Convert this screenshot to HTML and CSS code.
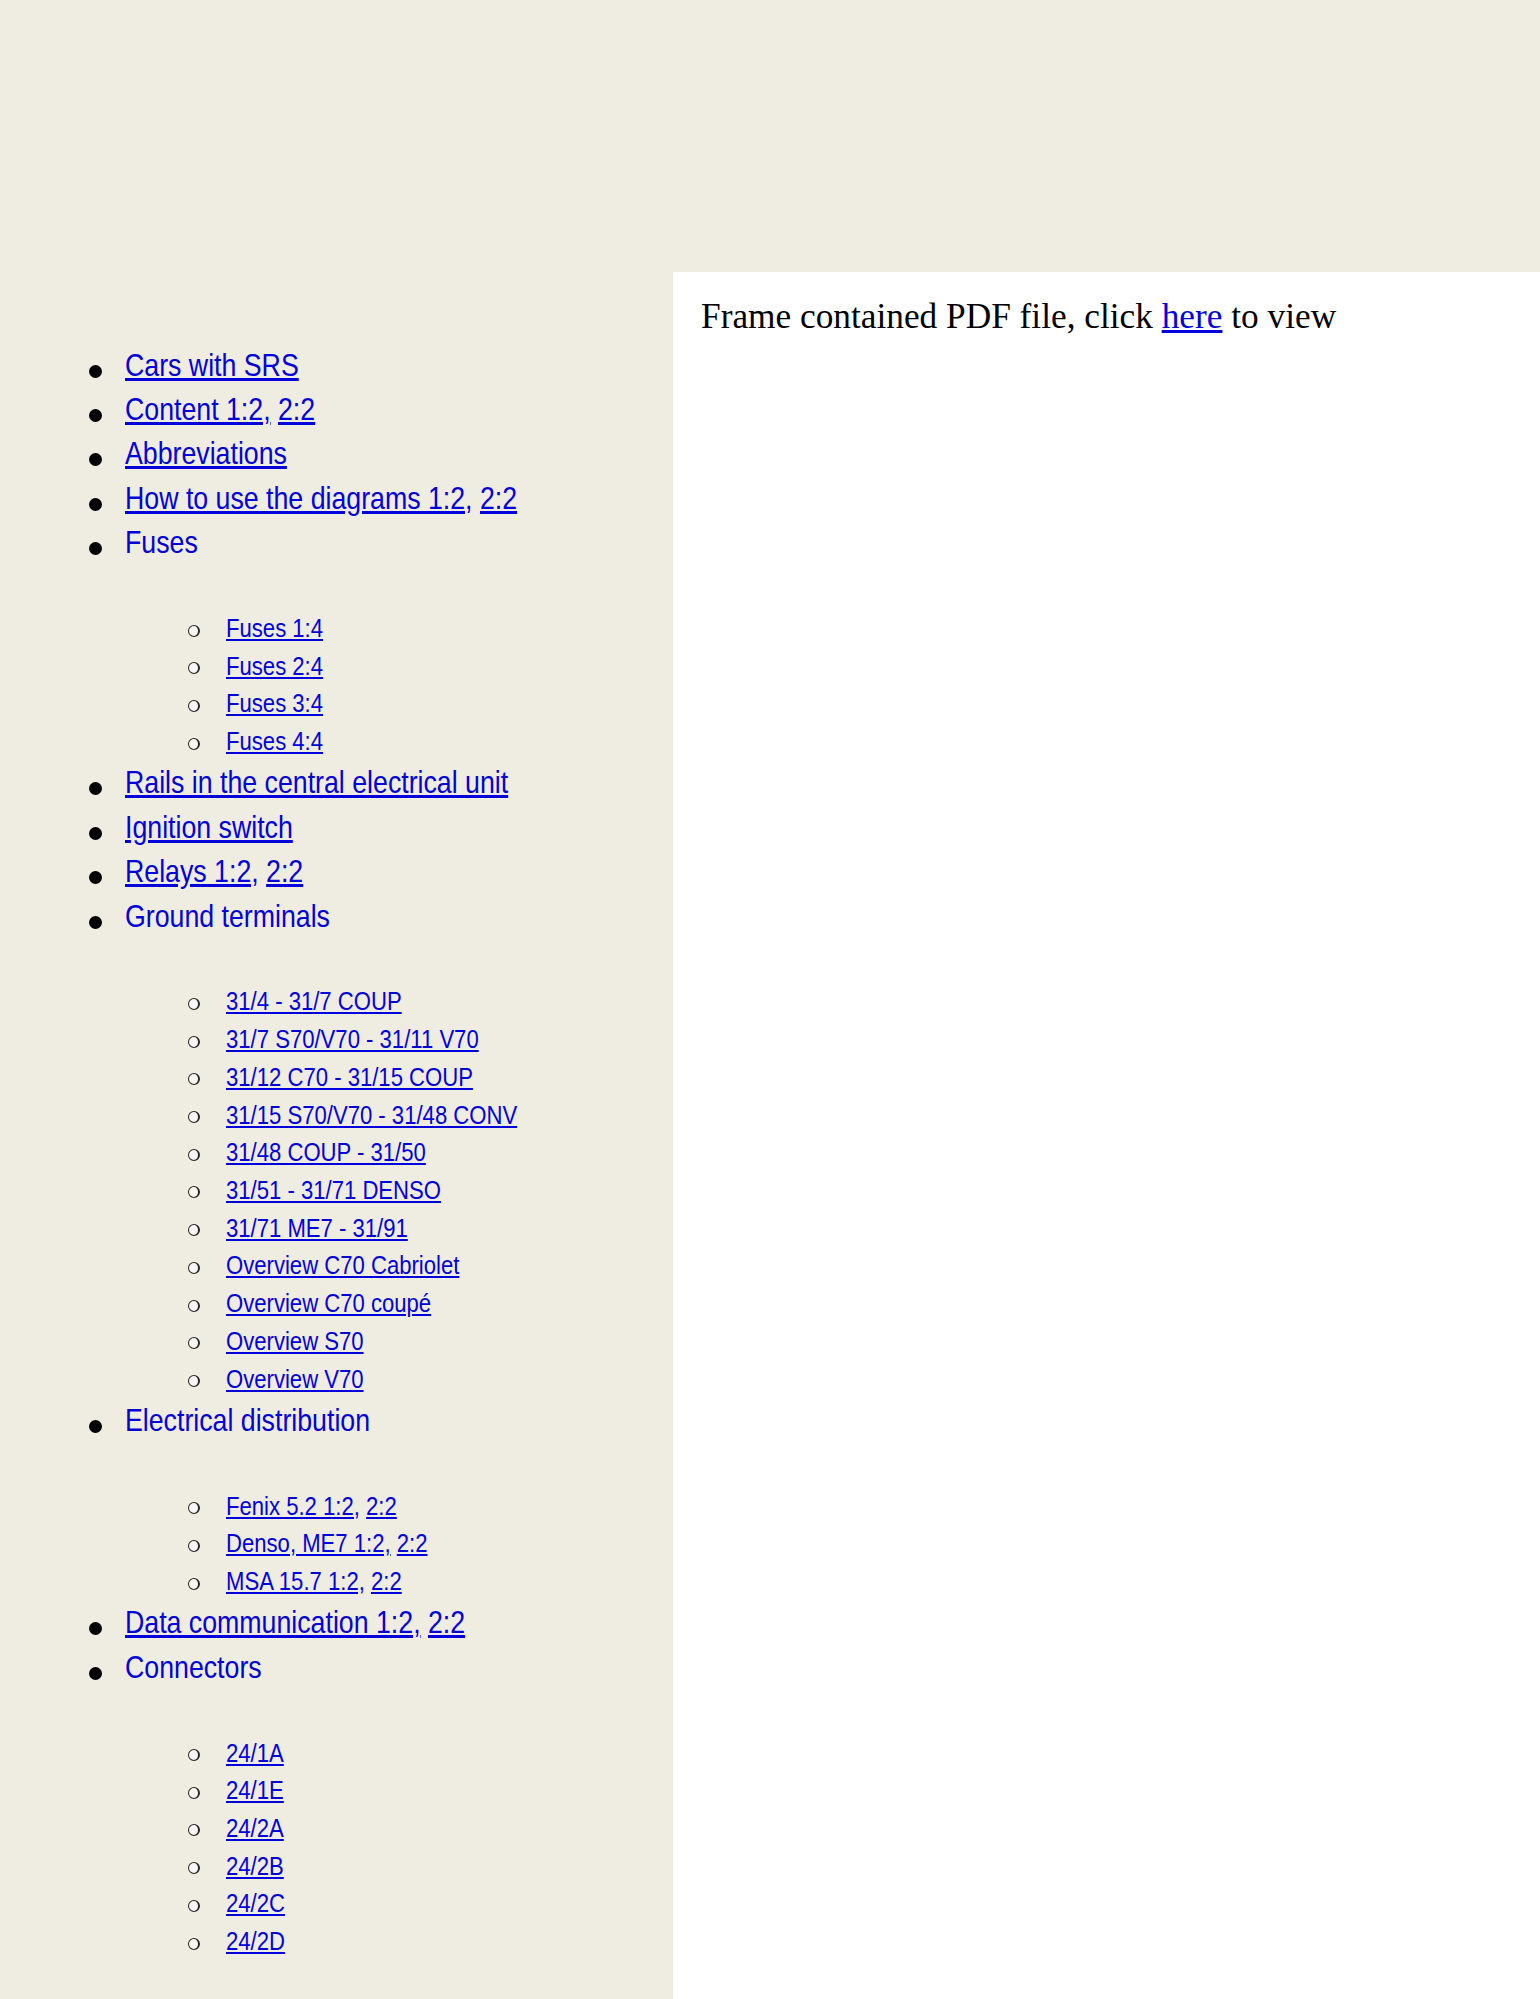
FILE: index.html
```html
<!DOCTYPE html>
<html>
<head>
<meta charset="utf-8">
<title>Wiring diagrams</title>
<link rel="stylesheet" href="styles.css">
</head>
<body>
<div class="topframe"></div>
<div class="frames">
  <div class="leftframe">
    <ul class="menu">
      <li><span class="t"><a href="#">Cars with SRS</a></span></li>
      <li><span class="t"><a href="#">Content 1:2,</a> <a href="#">2:2</a></span></li>
      <li><span class="t"><a href="#">Abbreviations</a></span></li>
      <li><span class="t"><a href="#">How to use the diagrams 1:2,</a> <a href="#">2:2</a></span></li>
      <li><span class="t label">Fuses</span>
        <ul class="sub">
          <li><span class="t"><a href="#">Fuses 1:4</a></span></li>
          <li><span class="t"><a href="#">Fuses 2:4</a></span></li>
          <li><span class="t"><a href="#">Fuses 3:4</a></span></li>
          <li><span class="t"><a href="#">Fuses 4:4</a></span></li>
        </ul>
      </li>
      <li><span class="t"><a href="#">Rails in the central electrical unit</a></span></li>
      <li><span class="t"><a href="#">Ignition switch</a></span></li>
      <li><span class="t"><a href="#">Relays 1:2,</a> <a href="#">2:2</a></span></li>
      <li><span class="t label">Ground terminals</span>
        <ul class="sub">
          <li><span class="t"><a href="#">31/4 - 31/7 COUP</a></span></li>
          <li><span class="t"><a href="#">31/7 S70/V70 - 31/11 V70</a></span></li>
          <li><span class="t"><a href="#">31/12 C70 - 31/15 COUP</a></span></li>
          <li><span class="t"><a href="#">31/15 S70/V70 - 31/48 CONV</a></span></li>
          <li><span class="t"><a href="#">31/48 COUP - 31/50</a></span></li>
          <li><span class="t"><a href="#">31/51 - 31/71 DENSO</a></span></li>
          <li><span class="t"><a href="#">31/71 ME7 - 31/91</a></span></li>
          <li><span class="t"><a href="#">Overview C70 Cabriolet</a></span></li>
          <li><span class="t"><a href="#">Overview C70 coupé</a></span></li>
          <li><span class="t"><a href="#">Overview S70</a></span></li>
          <li><span class="t"><a href="#">Overview V70</a></span></li>
        </ul>
      </li>
      <li><span class="t label">Electrical distribution</span>
        <ul class="sub">
          <li><span class="t"><a href="#">Fenix 5.2 1:2,</a> <a href="#">2:2</a></span></li>
          <li><span class="t"><a href="#">Denso, ME7 1:2,</a> <a href="#">2:2</a></span></li>
          <li><span class="t"><a href="#">MSA 15.7 1:2,</a> <a href="#">2:2</a></span></li>
        </ul>
      </li>
      <li><span class="t"><a href="#">Data communication 1:2,</a> <a href="#">2:2</a></span></li>
      <li><span class="t label">Connectors</span>
        <ul class="sub">
          <li><span class="t"><a href="#">24/1A</a></span></li>
          <li><span class="t"><a href="#">24/1E</a></span></li>
          <li><span class="t"><a href="#">24/2A</a></span></li>
          <li><span class="t"><a href="#">24/2B</a></span></li>
          <li><span class="t"><a href="#">24/2C</a></span></li>
          <li><span class="t"><a href="#">24/2D</a></span></li>
        </ul>
      </li>
    </ul>
  </div>
  <div class="mainframe">
    <p class="pdfnote">Frame contained PDF file, click <a href="#">here</a> to view</p>
  </div>
</div>
</body>
</html>
```

FILE: styles.css
```css
html, body {
  margin: 0;
  padding: 0;
}

body {
  background: #efece2;
  width: 1540px;
  min-height: 1999px;
}

.topframe {
  height: 272px;
  background: #efece2;
}

.frames {
  display: grid;
  grid-template-columns: 673px 1fr;
  min-height: 1727px;
}

.leftframe {
  background: #efece2;
  padding-top: 70.5px;
}

.mainframe {
  background: #ffffff;
  padding: 25px 0 0 28px;
}

.pdfnote {
  margin: 0;
  font-family: "Liberation Serif", "Times New Roman", serif;
  font-size: 35.3px;
  line-height: normal;
  color: #000;
}

.pdfnote a {
  color: #0000dd;
}

.menu {
  margin: 0;
  padding: 0 0 0 125px;
  list-style: none;
  font-family: "Liberation Sans", Arial, sans-serif;
  font-size: 32px;
  line-height: 44.4px;
  color: #0000dd;
}

.menu a {
  color: #0000dd;
  text-decoration: underline;
}

.label {
  color: #0000dd;
}

.t {
  display: inline-block;
  white-space: nowrap;
  transform: scaleX(0.835);
  transform-origin: 0 50%;
}

.sub .t {
  transform: scaleX(0.85);
}

.menu > li::before {
  content: "";
  display: inline-block;
  width: 13px;
  height: 13px;
  border-radius: 50%;
  background: #000;
  margin-left: -36.5px;
  margin-right: 23.5px;
  vertical-align: -2px;
}

.sub {
  margin: 45.5px 0 -0.5px 0;
  padding: 0 0 0 101px;
  list-style: none;
  font-size: 26px;
  line-height: 37.7px;
}

.sub > li::before {
  content: "";
  display: inline-block;
  box-sizing: border-box;
  width: 12px;
  height: 12px;
  border-radius: 50%;
  border: 1.5px solid #262626;
  border-right-width: 2.4px;
  background: #f8f7f2;
  margin-left: -38.5px;
  margin-right: 26.5px;
  vertical-align: 0.5px;
}
```
